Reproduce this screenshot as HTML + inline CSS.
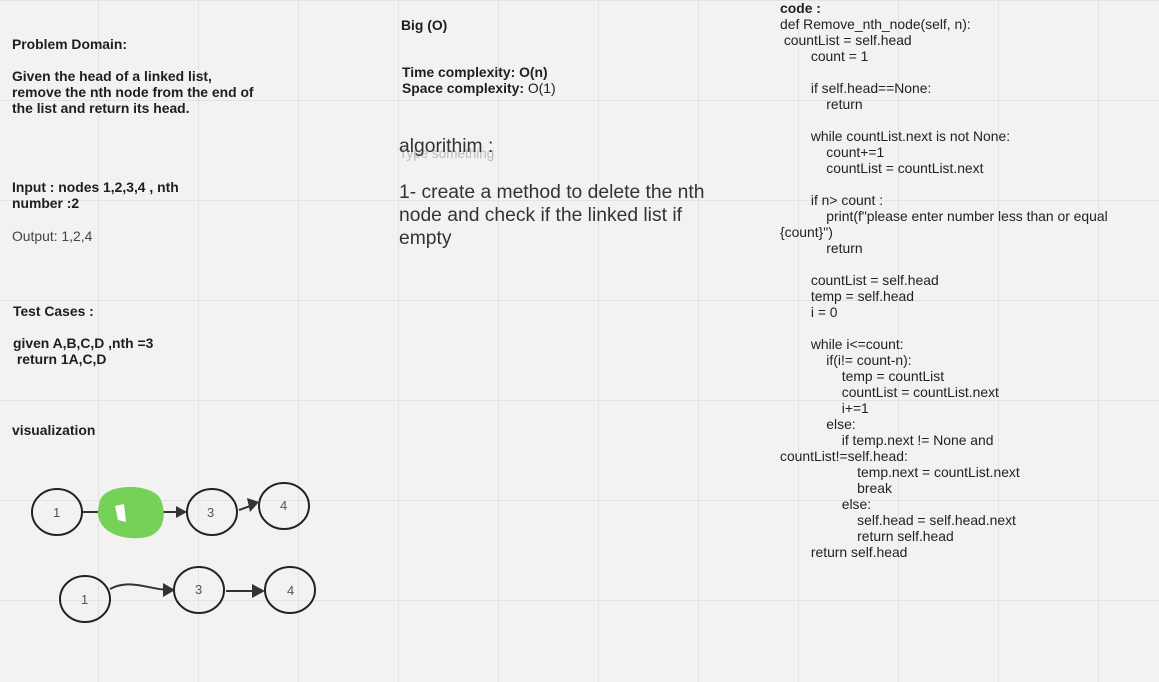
<!DOCTYPE html>
<html><head><meta charset="utf-8"><style>
html,body{margin:0;padding:0;}
body{width:1159px;height:682px;overflow:hidden;position:relative;background:#f2f2f2;
background-image:linear-gradient(to right,#e3e3e3 1px,transparent 1px),linear-gradient(to bottom,#e3e3e3 1px,transparent 1px);
background-size:100px 100px;background-position:98px 0,0 0;font-family:"Liberation Sans",sans-serif;color:#1e1e1e;}
.t{position:absolute;font-size:13.9px;line-height:16px;white-space:pre;}
.b{font-weight:bold;}
.c{position:absolute;font-size:13.9px;line-height:16px;white-space:pre;left:780px;top:0;color:#222;}
.a{position:absolute;font-size:19.3px;line-height:23px;color:#333;white-space:pre;}
</style></head><body>
<div class="t b" style="left:12px;top:36px">Problem Domain:

Given the head of a linked list,
remove the nth node from the end of
the list and return its head.</div>
<div class="t b" style="left:12px;top:179px">Input : nodes 1,2,3,4 , nth
number :2</div>
<div class="t" style="left:12px;top:228px;color:#444">Output: 1,2,4</div>
<div class="t b" style="left:13px;top:303px">Test Cases :

given A,B,C,D ,nth =3
 return 1A,C,D</div>
<div class="t b" style="left:12px;top:422px">visualization</div>

<div class="t b" style="left:401px;top:17px">Big (O)</div>
<div class="t b" style="left:402px;top:64px">Time complexity: O(n)
Space complexity: <span style="font-weight:normal">O(1)</span></div>
<div class="a" style="left:399px;top:142px;font-size:13.5px;color:#bbb">Type something</div>
<div class="a" style="left:399px;top:135px">algorithim :

1- create a method to delete the nth
node and check if the linked list if
empty</div>

<div class="c"><b>code :</b>
def Remove_nth_node(self, n):
 countList = self.head
        count = 1

        if self.head==None:
            return

        while countList.next is not None:
            count+=1
            countList = countList.next

        if n&gt; count :
            print(f"please enter number less than or equal
{count}")
            return

        countList = self.head
        temp = self.head
        i = 0

        while i&lt;=count:
            if(i!= count-n):
                temp = countList
                countList = countList.next
                i+=1
            else:
                if temp.next != None and
countList!=self.head:
                    temp.next = countList.next
                    break
                else:
                    self.head = self.head.next
                    return self.head
        return self.head</div>

<svg width="1159" height="682" style="position:absolute;left:0;top:0" font-family="Liberation Sans,sans-serif" font-size="13" fill="none" stroke="#222" stroke-width="2">
<ellipse cx="57" cy="512" rx="25" ry="23"/>
<line x1="83" y1="512" x2="104" y2="512" stroke="#333"/>
<line x1="160" y1="512" x2="183" y2="512" stroke="#333"/>
<path d="M176,506 L187,512 L176,518 z" fill="#333" stroke="none"/>
<path d="M100,500 C108,482 152,484 160,498 C168,515 164,537 140,538 C116,540 96,528 98,510 Z" fill="#76d158" stroke="none"/>
<path d="M115,506 L124,504 L126,522 L118,520 Z" fill="#fff" stroke="none"/>
<ellipse cx="212" cy="512" rx="25" ry="23"/>
<path d="M239,510 L256,504" stroke="#333"/>
<path d="M247,498 L259,502 L250,512 z" fill="#333" stroke="none"/>
<ellipse cx="284" cy="506" rx="25" ry="23"/>
<ellipse cx="85" cy="599" rx="25" ry="23"/>
<path d="M110,589 C130,578 150,590 170,590" stroke="#333"/>
<path d="M163,583 L175,590 L163,597 z" fill="#333" stroke="none"/>
<ellipse cx="199" cy="590" rx="25" ry="23"/>
<line x1="226" y1="591" x2="258" y2="591" stroke="#333"/>
<path d="M252,584 L265,591 L252,598 z" fill="#333" stroke="none"/>
<ellipse cx="290" cy="590" rx="25" ry="23"/>
<g fill="#555" stroke="none"><text x="53" y="517">1</text><text x="207" y="517">3</text><text x="280" y="510">4</text>
<text x="81" y="604">1</text><text x="195" y="594">3</text><text x="287" y="595">4</text></g>
</svg>
</body></html>
